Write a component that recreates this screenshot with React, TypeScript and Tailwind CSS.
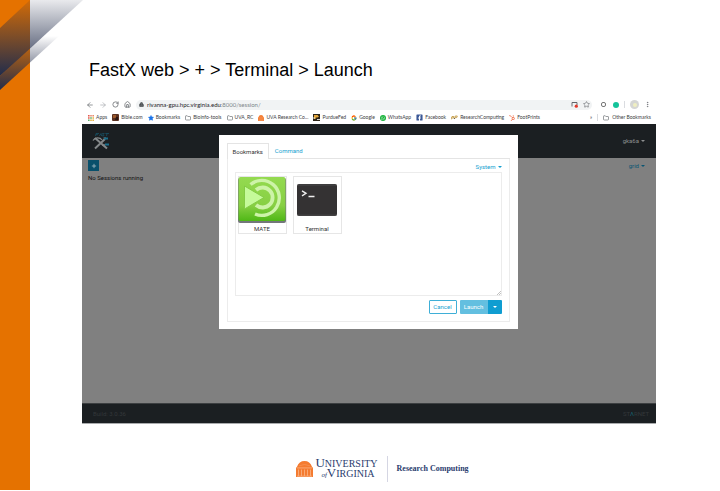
import React from "react";
import { ArrowLeft, ArrowRight, RotateCw, House, Lock, Star, Folder, Plus, EllipsisVertical } from "lucide-react";
import { FcGoogle } from "react-icons/fc";
import { FaWhatsapp, FaFacebookSquare, FaHubspot } from "react-icons/fa";

const FolderIcon = () => <Folder className="size-[6px] text-[#5f6368]" strokeWidth={2.5} />;

const AppsIcon = () => (
  <svg viewBox="0 0 6 6" className="size-[6px]">
    <path d="M0 0h1.6v1.6H0zM0 2.2h1.6v1.6H0z" fill="#e4574b" />
    <path d="M2.2 0h1.6v1.6H2.2zM4.4 0H6v1.6H4.4z" fill="#e98a6c" />
    <path d="M2.2 2.2h1.6v1.6H2.2zM0 4.4h1.6V6H0z" fill="#5eae6b" />
    <path d="M4.4 2.2H6v1.6H4.4zM2.2 4.4h1.6V6H2.2zM4.4 4.4H6V6H4.4z" fill="#e6b545" />
  </svg>
);

const BibleIcon = () => (
  <svg viewBox="0 0 7 7" className="size-[7px]">
    <rect width="7" height="7" rx="1" fill="#5a3020" />
    <path d="M1 1h3v3H1z" fill="#9c5a2c" />
    <path d="M4 3h2v3H3z" fill="#2b1512" />
  </svg>
);

const Rotunda = ({ className }: { className: string }) => (
  <svg viewBox="0 0 17 15" preserveAspectRatio="none" className={className}>
    <path d="M0 15V7Q0 6 1 5.500Q3 0 8.500 0T16 5.500Q17 6 17 7V15Z" fill="#f47b30" />
    <path d="M1 6.500H16M2.500 8V14M5.500 8V14M8.500 8V14M11.500 8V14M14.500 8V14M1 14.200H16" stroke="#fbc6a0" strokeWidth=".6" fill="none" />
    <path d="M3 4.500Q8.500 2 14 4.500" stroke="#f9a873" strokeWidth=".4" fill="none" />
  </svg>
);

const PurdueIcon = () => (
  <svg viewBox="0 0 7 7" className="size-[7px]">
    <path d="M0 0h7v7H0z" fill="#2c2416" />
    <path d="M1 1h3.500L6 2.500 4.500 3.500H3L2.500 5H1z" fill="#e2a53a" />
    <path d="M0 4h2M4 5.500h3" stroke="#fff" strokeWidth=".8" />
  </svg>
);

const RcIcon = () => (
  <svg viewBox="0 0 7 5" className="h-[5px] w-[7px]">
    <path d="M0 4.500 1 1.500h1.800L2.200 3H.8M3.500 4 4.300 1h2L5.700 2.600H4.200" stroke="#c29a43" strokeWidth=".9" fill="none" />
    <path d="M2.800 3.500h1" stroke="#333" strokeWidth=".8" />
  </svg>
);

const bookmarks: { label: string; icon: React.ReactNode }[] = [
  { label: "Apps", icon: <AppsIcon /> },
  { label: "Bible.com", icon: <BibleIcon /> },
  { label: "Bookmarks", icon: <Star className="size-[6px] fill-[#1a73e8] text-[#1a73e8]" /> },
  { label: "Bioinfo-tools", icon: <FolderIcon /> },
  { label: "UVA_RC", icon: <FolderIcon /> },
  { label: "UVA Research Co...", icon: <Rotunda className="h-[6px] w-[6px]" /> },
  { label: "PurdueFed", icon: <PurdueIcon /> },
  { label: "Google", icon: <FcGoogle className="size-[6px]" /> },
  { label: "WhatsApp", icon: <span className="flex size-[6px] items-center justify-center rounded-full bg-[#19b33b] text-white"><FaWhatsapp className="size-[4px]" /></span> },
  { label: "Facebook", icon: <FaFacebookSquare className="size-[7px] text-[#3b5998]" /> },
  { label: "ResearchComputing", icon: <RcIcon /> },
  { label: "FootPrints", icon: <FaHubspot className="size-[6px] text-[#f26b45]" /> },
];

const Caret = () => (
  <svg viewBox="0 0 4 2" className="h-[2px] w-[4px]" fill="currentColor">
    <path d="M0 0h4L2 2z" />
  </svg>
);

function BrowserBar() {
  return (
    <div className="bg-white font-['Lato',sans-serif] text-[#3c4043]">
      <div className="flex h-[13px] items-center gap-[5px] pr-[5px] pl-[4px]">
        <button aria-label="Back"><ArrowLeft className="size-[8px] text-[#5f6368]" /></button>
        <button aria-label="Forward"><ArrowRight className="size-[8px] text-[#a5a8ac]" /></button>
        <button aria-label="Reload"><RotateCw className="size-[7px] text-[#5f6368]" strokeWidth={2.500} /></button>
        <button aria-label="Home"><House className="size-[7px] text-[#5f6368]" strokeWidth={2.500} /></button>
        <div className="flex h-[10px] flex-1 items-center rounded-full bg-[#f1f3f4] pr-[2px] pl-[3px] text-[6px]">
          <Lock className="mr-[3px] size-[5px] fill-[#5f6368]" strokeWidth={3} />
          <span className="flex-1 whitespace-nowrap text-[#202124]">
            rivanna-gpu.hpc.virginia.edu<span className="text-[#80868b]">:8000/session/</span>
          </span>
          <svg viewBox="0 0 7 7" className="mr-[5px] size-[7px]">
            <path d="M1 5.500V1.500H6V4M1 1.500H6" stroke="#5f6368" strokeWidth=".9" fill="none" />
            <circle cx="5.300" cy="5.200" r="1.600" fill="#e3392c" />
          </svg>
          <Star className="size-[7px] text-[#5f6368]" />
        </div>
        <span className="ml-[4px] size-[5px] rounded-[2px] border border-[#777]" />
        <span className="ml-[2px] size-[6px] rounded-full bg-[#15c39a]" />
        <span className="h-[7px] w-px bg-[#dadce0]" />
        <span className="flex size-[9px] items-center justify-center rounded-full bg-[#d5d6d4]">
          <span className="size-[4px] rounded-full bg-[#f0efc0]" />
        </span>
        <button aria-label="Menu"><EllipsisVertical className="size-[7px] text-[#5f6368]" /></button>
      </div>
      <nav className="flex h-[13px] items-center gap-[5px] pr-[5px] pl-[6px] text-[5px]">
        {bookmarks.map((b) => (
          <a key={b.label} href="#" className="flex shrink-0 items-center gap-[2px] whitespace-nowrap">
            {b.icon}
            <span>{b.label}</span>
          </a>
        ))}
        <span className="ml-auto">»</span>
        <span className="h-[7px] w-px bg-[#dadce0]" />
        <a href="#" className="flex shrink-0 items-center gap-[3px] whitespace-nowrap">
          <FolderIcon />
          <span>Other Bookmarks</span>
        </a>
      </nav>
    </div>
  );
}

function FastXLogo() {
  return (
    <svg viewBox="0 0 20 18" className="h-[18px] w-[20px]" role="img" aria-label="FastX">
      <path d="M5 1.500H8M5 1.500 4.500 4M5 2.700H7M8.300 4 10 1.500 10.600 4M13.500 1.500H11.500L13 3.800H11M14.300 1.500H18M16 1.500 15.500 4" stroke="#17566c" strokeWidth=".7" fill="none" />
      <path d="M4 6 16 16.500M14 7 4 16.500" stroke="#85898b" strokeWidth="2" fill="none" />
      <path d="M2 8.500C4 5 9 5 11 8M12.500 6H15M11 13.500 15 12.500" stroke="#85898b" strokeWidth="1.200" fill="none" />
      <path d="M13 6.500H17M14 12.500H18" stroke="#1a6f8c" strokeWidth="1.800" />
    </svg>
  );
}

function MateIcon() {
  return (
    <svg viewBox="0 0 48 46" className="h-[46px] w-[48px]">
      <defs>
        <linearGradient id="mate" x1="0" y1="0" x2="0" y2="1">
          <stop offset="0" stopColor="#94da50" />
          <stop offset=".65" stopColor="#87cf43" />
          <stop offset="1" stopColor="#4fb816" />
        </linearGradient>
      </defs>
      <rect y="1" width="48" height="45" rx="2" fill="#73777a" />
      <rect x=".5" width="47" height="44" rx="2" fill="url(#mate)" />
      <path d="M12.500 7.500A17.500 17.500 0 1 1 17 37" stroke="#cdf3a8" strokeWidth="3.400" fill="none" />
      <path d="M18 13A10 10 0 1 1 18 28" stroke="#cdf3a8" strokeWidth="3.800" fill="none" />
      <path d="M6.500 9V32L26 20.500Z" fill="#c5fa9a" stroke="#83cb45" strokeWidth="1" />
    </svg>
  );
}

function TerminalIcon() {
  return (
    <svg viewBox="0 0 40 32" className="h-[32px] w-[40px]">
      <rect width="40" height="32" rx="2" fill="#343233" />
      <path d="M.5 1H39.500M.5 31.200H39.500" stroke="#555" strokeWidth=".7" />
      <path d="M5 6.800 9 9.300 5 11.800M11.500 12.500H17.500" stroke="#eee" strokeWidth="1.400" fill="none" />
    </svg>
  );
}

function LaunchDialog() {
  return (
    <div role="dialog" aria-label="Launch session" className="w-[299px] bg-white px-[8px] pt-[8px] pb-[7px] text-[6px] leading-[8px] text-[#333]">
      <div role="tablist" className="flex border-b border-[#e4e4e4]">
        <button role="tab" aria-selected="true" className="-mb-px h-[16px] border border-b-0 border-[#e4e4e4] bg-white px-[5px]">Bookmarks</button>
        <button role="tab" aria-selected="false" className="h-[15px] px-[6px] text-[#159fd0]">Command</button>
      </div>
      <div className="border border-t-0 border-[#ececec] px-[7px] pt-[2px] pb-[7px]">
        <div className="flex h-[11px] items-center justify-end">
          <button className="flex items-center gap-[2px] text-[#159fd0]">System<Caret /></button>
        </div>
        <div className="relative flex h-[124px] items-start gap-[6px] border border-[#ececec] p-[2px] pt-[3px]">
          <button className="flex h-[58px] w-[49px] flex-col items-center justify-between border border-[#e6e6e6]">
            <MateIcon />
            <span>MATE</span>
          </button>
          <button className="flex h-[58px] w-[49px] flex-col items-center justify-between border border-[#e6e6e6] pt-[7px]">
            <TerminalIcon />
            <span>Terminal</span>
          </button>
          <svg viewBox="0 0 4 4" className="absolute right-0 bottom-0 size-[4px]">
            <path d="M0 4 4 0M2 4 4 2" stroke="#999" strokeWidth=".6" />
          </svg>
        </div>
        <div className="mt-[4px] flex h-[14px] justify-end">
          <button className="mr-[3px] w-[28px] rounded-[1px] border border-[#3fafd7] text-[#159fd0]">Cancel</button>
          <button className="w-[28px] rounded-l-[1px] bg-[#63bfe0] text-white">Launch</button>
          <button aria-label="Launch options" className="flex w-[14px] items-center justify-center rounded-r-[1px] bg-[#0f9dd1] text-white"><Caret /></button>
        </div>
      </div>
    </div>
  );
}

function FastXApp() {
  return (
    <div className="relative flex h-[300px] flex-col border-b border-[#a9abad] bg-[#808080] text-[6px] leading-[8px]">
      <header className="flex h-[34px] items-center justify-between bg-[#1b1f22] pr-[11px] pl-[9px]">
        <FastXLogo />
        <button className="flex items-center gap-[2px] text-[#8d8f90]">gka6a<Caret /></button>
      </header>
      <div className="flex-1 px-[6px] pt-[2px]">
        <div className="flex items-center justify-between pr-[5px]">
          <button aria-label="New session" className="flex size-[11px] items-center justify-center bg-[#09506b] text-[#b2c4cc]">
            <Plus className="size-[6px]" strokeWidth={3} />
          </button>
          <button className="flex items-center gap-[2px] text-[#0a5572]">grid<Caret /></button>
        </div>
        <p className="mt-[3px] text-[#111]">No Sessions running</p>
      </div>
      <footer className="flex h-[20px] items-center justify-between border-t border-[#3c3f41] bg-[#1b1f22] pr-[7px] pl-[11px] text-[#33373a]">
        <span>Build: 3.0.36</span>
        <span>ST<span className="text-[#166070]">Λ</span>RNET</span>
      </footer>
      <div className="absolute inset-0 flex items-start justify-center pt-[11px] pr-[2px]">
        <LaunchDialog />
      </div>
    </div>
  );
}

export default function App() {
  return (
    <div className="relative flex min-h-screen bg-white font-['Roboto',sans-serif]">
      <div className="mb-px w-[30px] shrink-0 bg-[#e57200]" />
      <svg viewBox="0 0 90 92" className="absolute top-0 left-0 h-[92px] w-[90px]" aria-hidden="true">
        <defs>
          <linearGradient id="bandA" gradientUnits="userSpaceOnUse" x1="0" y1="0" x2="0" y2="75">
            <stop offset="0" stopColor="#232d4b" stopOpacity=".1" />
            <stop offset="1" stopColor="#232d4b" />
          </linearGradient>
          <linearGradient id="bandB" gradientUnits="userSpaceOnUse" x1="0" y1="36" x2="0" y2="90">
            <stop offset="0" stopColor="#232d4b" stopOpacity="0" />
            <stop offset="1" stopColor="#232d4b" />
          </linearGradient>
        </defs>
        <path d="M30 0H83L0 76V28Z" fill="url(#bandA)" />
        <path d="M59 36 0 90V76L43 36Z" fill="url(#bandB)" />
      </svg>
      <main className="min-w-0 flex-1 pt-[59px] pr-[64px] pl-[52px]">
        <h1 className="mb-[17px] pl-[7px] font-['Liberation_Sans',Arial,sans-serif] text-[18px] leading-[22px] text-black">
          FastX web &gt; + &gt; Terminal &gt; Launch
        </h1>
        <BrowserBar />
        <FastXApp />
        <footer className="mt-[32px] flex items-center justify-center pl-[27px] font-['Liberation_Serif','Times_New_Roman',serif] text-[#2a3c6e]">
          <Rotunda className="mr-[2px] h-[16px] w-[17px]" />
          <div className="text-[10px] leading-[9px]">
            <div><span className="text-[13px]">U</span>NIVERSITY</div>
            <div className="pl-[6px]"><span className="text-[7px] italic">of</span><span className="text-[13px]">V</span>IRGINIA</div>
          </div>
          <div className="mr-[9px] ml-[9px] h-[26px] w-px bg-[#d5d6e3]" />
          <span className="text-[8px] font-bold">Research Computing</span>
        </footer>
      </main>
    </div>
  );
}
